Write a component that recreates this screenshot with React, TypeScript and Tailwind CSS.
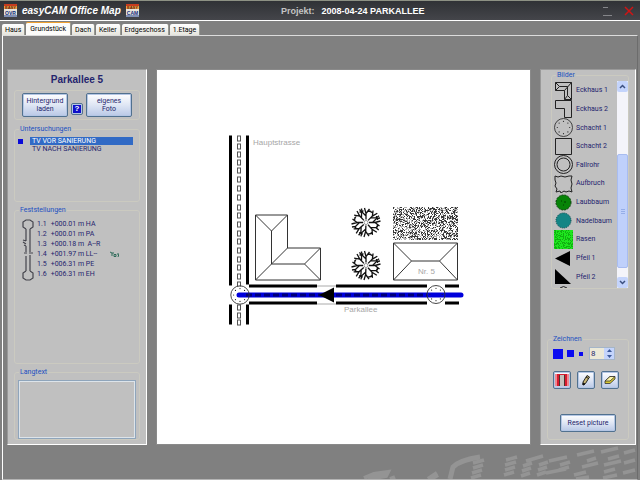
import React, { useState } from 'react';

const tabs = ['Haus', 'Grundstück', 'Dach', 'Keller', 'Erdgeschoss', '1.Etage'];

const inspections = ['TV VOR SANIERUNG', 'TV NACH SANIERUNG'];

const findings = [
  { no: '1.1', pos: '+000.01 m', code: 'HA' },
  { no: '1.2', pos: '+000.01 m', code: 'PA' },
  { no: '1.3', pos: '+000.18 m', code: ' A--R' },
  { no: '1.4', pos: '+001.97 m', code: 'LL--', photo: true },
  { no: '1.5', pos: '+006.31 m', code: 'PE' },
  { no: '1.6', pos: '+006.31 m', code: 'EH' },
];

// Speckles for lawn areas, always the same for a given seed
const speckles = (w: number, h: number, density: number, seed: number) => {
  let s = seed;
  let d = '';
  for (let y = 0; y < h; y++) {
    for (let x = 0; x < w; x++) {
      s = (s * 16807) % 2147483647;
      if (s / 2147483647 < density) d += `M${x} ${y}h1v1h-1z`;
    }
  }
  return d;
};

const lawnDark = speckles(65, 33, 0.32, 4711);
const lawnGray = speckles(65, 33, 0.4, 815);
const lawnIcon = speckles(19, 19, 0.4, 99);

const buttonStyle =
  'rounded-[2px] border border-[#51718f] bg-linear-to-b from-white via-[#dfe6f4] to-[#b9c8e6] text-[#24246a] shadow-[inset_0_0_0_1px_#b4c6e4]';

const Manhole = ({ cx, cy, r }: { cx: number; cy: number; r: number }) => (
  <g>
    <circle cx={cx} cy={cy} r={r} fill="none" stroke="#333" strokeWidth="0.9" />
    {[0, 45, 90, 135, 180, 225, 270, 315].map((a) => (
      <circle
        key={a}
        cx={cx + (r - 2.8) * Math.cos((a * Math.PI) / 180)}
        cy={cy + (r - 2.8) * Math.sin((a * Math.PI) / 180)}
        r="0.6"
        fill="#222"
        stroke="none"
      />
    ))}
  </g>
);

const Tree = ({ x, y }: { x: number; y: number }) => (
  <g transform={`translate(${x} ${y})`} fill="none" stroke="#111">
    <circle r="2" stroke="#777" strokeWidth="0.8" />
    {[-90, -45, 0, 48, 92, 138, 180, 226].map((a, i) => (
      <path
        key={a}
        transform={`rotate(${a}) scale(1 ${i % 3 === 1 ? -1 : 1})`}
        strokeWidth="1.300"
        d="M3 0H9L14.500 -1.500M9 0L13.500 3.500M6.500 0L10.500 -4L14 -4.500M10.500 -4V-6.500M11.500 2L11 5"
      />
    ))}
  </g>
);

const dashes = [135, 143, 151, 159, 167, 176, 185, 194, 204, 212, 221, 230, 238, 247, 256, 264, 273, 281, 304, 312, 319];

const SitePlan = () => (
  <svg viewBox="157 70 373 373" className="block h-full w-full" role="img" aria-label="Lageplan">
    {/* Hauptstrasse */}
    <path d="M229 135h3v150h-3zM246 135h3v149h-3zM229 304h3v20h-3zM246 304h3v20h-3z" fill="#000" />
    {dashes.map((y) => (
      <rect key={y} x="237.500" y={y + 0.5} width="3" height="5" fill="none" stroke="#555" strokeWidth="1" />
    ))}
    {/* Parkallee */}
    <path d="M249 284h68v3h-68zM336 284h91v3h-91zM445 284h14v3h-14zM249 301h68v3h-68zM336 301h91v3h-91zM445 301h14v3h-14z" fill="#000" />
    <path d="M317 285.500h19M317 303.500h19" stroke="#aaa" fill="none" />
    <rect x="231" y="286" width="18" height="17" fill="#fff" />
    <path d="M239 294.500H461" stroke="#0000dc" strokeWidth="5" strokeLinecap="round" />
    <path d="M246 294.500H427" stroke="#000078" strokeWidth="3" strokeDasharray="6 3" />
    <Manhole cx={240} cy={294.5} r={9.2} />
    <Manhole cx={436} cy={294} r={9} />
    <path d="M319 294.500L334 287v15z" fill="#000" />
    {/* Houses */}
    <g fill="none" stroke="#333" strokeWidth="1">
      <path d="M255.500 214.500h32v33h33v32h-65z" />
      <path d="M255.500 214.500l16 16l16 -16M271.500 230.500v33h33M255.500 279.500l32 -32M320.500 247.500l-16 16l16 16" />
      <path d="M393.500 242.500h64v37h-64zM393.500 242.500l18 18l-18 19M457.500 242.500l-18 18l18 19M411.500 260.500h28" />
    </g>
    <g transform="translate(393 206)" shapeRendering="crispEdges">
      <path d={lawnGray} fill="#b0b0b0" />
      <path d={lawnDark} fill="#383838" />
    </g>
    <Tree x={366} y={222} />
    <Tree x={366} y={265} />
    <g fill="#a6a6a6" fontSize="8" fontFamily="Liberation Sans, sans-serif">
      <text x="253" y="144">Hauptstrasse</text>
      <text x="344" y="311">Parkallee</text>
      <text x="418" y="273">Nr. 5</text>
    </g>
  </svg>
);

const pictures: { name: string; icon: React.ReactNode }[] = [
  {
    name: 'Eckhaus 1',
    icon: <path d="M1.500 1.500h16v17h-7v-9h-9zM1.500 1.500l4 4l-4 4M5.500 5.500h8v9l-3 4M13.500 14.500l4 4M10.500 9.500l7 -8" />,
  },
  { name: 'Eckhaus 2', icon: <path d="M1.500 1.500h16v17h-7v-9h-9z" /> },
  { name: 'Schacht 1', icon: <Manhole cx={9.5} cy={9.5} r={9} /> },
  { name: 'Schacht 2', icon: <path d="M1.500 1.500h16v16h-16z" /> },
  {
    name: 'Fallrohr',
    icon: (
      <>
        <circle cx="9.500" cy="9.500" r="9" />
        <circle cx="9.500" cy="9.500" r="6.500" />
      </>
    ),
  },
  {
    name: 'Aufbruch',
    icon: <path d="M1 2l3 1l3 -1l4 1l4 -1l3 0l-1 4l1 4l-1 4l1 4l-3 -1l-3 1l-2 -1l-3 2l-1 -2l-4 1l1 -3l-2 -3l1 -3l-1 -3z" />,
  },
  {
    name: 'Laubbaum',
    icon: (
      <>
        <circle cx="9.500" cy="9.500" r="7.500" fill="#078307" stroke="#023c02" strokeDasharray="2 1" />
        <path d="M7 8h1M10 9h2M9 12h1" stroke="#023c02" />
      </>
    ),
  },
  {
    name: 'Nadelbaum',
    icon: <circle cx="9.500" cy="9.500" r="7.500" fill="#148585" stroke="#05484c" strokeDasharray="1 1" />,
  },
  {
    name: 'Rasen',
    icon: (
      <>
        <rect width="19" height="19" fill="#1ee61e" stroke="none" />
        <path d={lawnIcon} fill="#10b010" stroke="none" shapeRendering="crispEdges" />
      </>
    ),
  },
  { name: 'Pfeil 1', icon: <path d="M1 9.500L16 2v15z" fill="#000" stroke="none" /> },
  { name: 'Pfeil 2', icon: <path d="M1 2v15h16z" fill="#000" stroke="none" /> },
];

// Small program badge in the title bar
const Badge = ({ label }: { label: string }) => (
  <svg viewBox="0 0 13 13" className="size-[13px]" aria-hidden="true">
    <rect width="13" height="13" fill="#e9e4da" />
    <path d="M0 0h13v2H0z" fill="#c83c1e" />
    <path d="M0 2h13v3H0z" fill="#f0a040" />
    <g fontFamily="Liberation Sans, sans-serif" fontWeight="700" textAnchor="middle">
      <text x="6.500" y="4.500" fontSize="4" fill="#5a1c10">EASY</text>
      <text x="6.500" y="10.500" fontSize="5" fill="#102c80">{label}</text>
    </g>
    <path d="M0 12h13" stroke="#183c90" />
  </svg>
);

const Group = ({ title, className, children }: { title: string; className: string; children: React.ReactNode }) => (
  <fieldset className={`relative min-w-0 rounded-[3px] border border-[#cbcac0] ${className}`}>
    <legend className="absolute -top-[5px] left-[4px] bg-[#c0c0c0] px-px leading-[9px] text-[#1c50c0]">{title}</legend>
    {children}
  </fieldset>
);

const App: React.FC = () => {
  const [tab, setTab] = useState('Grundstück');
  const [inspection, setInspection] = useState(inspections[0]);
  const [size, setSize] = useState(8);

  return (
    <div className="flex min-h-screen flex-col bg-[#808080] font-['Roboto','Liberation_Sans',sans-serif] text-[7px] leading-[10px] text-[#24246e]">
      {/* Title bar */}
      <header className="grid h-[21px] grid-cols-[281px_1fr_auto] items-center border-t border-b border-t-[#8d9184] border-b-white bg-linear-to-b from-[#303236] to-[#44454a] font-['Liberation_Sans',sans-serif]">
        <div className="flex items-center gap-[5px] pl-1">
          <Badge label="OVR" />
          <h1 className="text-[10px] font-bold text-white italic">easyCAM Office Map</h1>
          <Badge label="CAM" />
        </div>
        <div className="flex gap-[7px] text-[9px] font-bold">
          <span className="text-[#c4c4c4]">Projekt:</span>
          <span className="text-white">2008-04-24 PARKALLEE</span>
        </div>
        <div className="flex items-center gap-3 pr-[6px]">
          <button aria-label="Minimieren">
            <svg viewBox="0 0 10 10" className="size-[10px]" stroke="#85868a" fill="none">
              <path d="M1 1.500h5M1 9.500h9" />
            </svg>
          </button>
          <button aria-label="Schließen">
            <svg viewBox="0 0 10 10" className="size-[10px]" stroke="#d01414" strokeWidth="1.500">
              <path d="M1 1l8 8M9 1l-8 8" />
            </svg>
          </button>
        </div>
      </header>

      {/* Tabs */}
      <nav className="flex h-[14px] items-end gap-px pl-[2px]">
        {tabs.map((name) => (
          <button
            key={name}
            onClick={() => setTab(name)}
            className={
              name === tab
                ? 'h-[13px] rounded-t-[2px] border-t border-r border-t-[#f0a030] border-r-[#9a9a90] bg-[#fcfcfa] px-1 text-black'
                : 'h-[11px] rounded-t-[2px] border-r border-[#9a9a90] bg-linear-to-b from-white to-[#e6e5dd] px-[3px] text-black'
            }
          >
            {name}
          </button>
        ))}
      </nav>

      <main className="relative mr-[2px] ml-[2px] flex flex-1 flex-col border border-t-[#dcdcdc] border-r-[#6c6c6c] border-b-[#b4b4b4] border-l-white">
        <svg viewBox="0 0 275 38" className="absolute right-0 bottom-0 h-[38px] w-[275px]" aria-hidden="true">
          <g stroke="#949494" strokeWidth="3.500" fill="none">
            <path d="M2 37L12 33L26 31L24 35L6 38M28 38l5 -2M66 38L75 32M69 38L76 34" strokeWidth="4" />
            <path d="M88 38L91 26Q98 19 118 16" strokeWidth="5" />
            <path d="M111 22l11 -3M111 27l10 -3M110 32l10 -3M109 37l10 -3" />
            <path d="M144 19l11 -3M143 24l11 -3M143 29l10 -3M142 34l10 -3M164 20l17 -5M161 25l9 -3M160 30l9 -3M159 35l9 -3M177 24l9 -3M176 29l9 -3M175 34l9 -3M187 20l18 -4M198 24l10 -3M197 29l10 -3M184 32l20 -4" />
            <path d="M215 14l17 -4M225 20l9 -3M220 26l16 -4M212 34l12 -3M214 38l13 -2M239 11l17 -4M246 18l11 -3M242 24l17 -4M242 31l11 -3M241 37l14 -3M262 12l11 -3M262 22l11 -3M261 32l12 -3" />
          </g>
        </svg>

        <div className="relative mt-[33px] mr-[1px] mb-[34px] ml-[4px] grid flex-1 grid-cols-[140px_1fr_96px] gap-[9px]">
          {/* Left panel */}
          <section className="flex flex-col border border-t-[#999] border-r-white border-b-white border-l-[#999] bg-[#c0c0c0] px-[6px] pb-1">
            <h2 className="pt-1 text-center font-['Liberation_Sans',sans-serif] text-[10px] leading-[12px] font-bold">Parkallee 5</h2>
            <div className="mt-1 flex h-[30px] items-center justify-center gap-[3px] rounded-[3px] border border-[#cbcac0]">
              <button className={`h-[24px] w-[46px] leading-[8px] ${buttonStyle}`}>
                Hintergrund
                <br />
                laden
              </button>
              <button aria-label="Hilfe" className={`mt-2 flex size-[12px] items-center justify-center p-px ${buttonStyle}`}>
                <span className="w-full bg-[#1010c8] font-['Liberation_Sans',sans-serif] text-[8px] leading-[8px] font-bold text-white">?</span>
              </button>
              <button className={`h-[24px] w-[46px] leading-[8px] ${buttonStyle}`}>
                eigenes
                <br />
                Foto
              </button>
            </div>

            <Group title="Untersuchungen" className="mt-[9px] h-[73px] pt-[7px] pr-[6px]">
              {inspections.map((name) => (
                <button key={name} onClick={() => setInspection(name)} className="flex w-full items-center pl-[3px] text-left leading-[8px]">
                  <span className={name === inspection ? 'mr-[7px] size-[5px] bg-[#0a0ad8]' : 'mr-[7px] size-[5px]'} />
                  <span className={name === inspection ? 'flex-1 bg-[#316ac5] pl-[2px] text-white' : 'flex-1 pl-[2px]'}>{name}</span>
                </button>
              ))}
            </Group>

            <Group title="Feststellungen" className="mt-[8px] flex h-[154px] gap-[2px] pt-[8px] pl-[7px]">
              <svg viewBox="0 0 13 62" className="h-[62px] w-[13px] shrink-0" fill="none" stroke="#44444c" strokeWidth="1.200" aria-hidden="true">
                <path d="M4 10L1 8V3L4 1H8L11 3V8L8 10M4 10V22M8 10V33M4 22L1 21M4 25L1 23M4 27L2 26M4 27V33M2 34h3M7 34h4M4 37V52M8 36V52M4 52L1 54V59L4 61H8L11 59V54L8 52" />
              </svg>
              <ul className="flex-1">
                {findings.map((f) => (
                  <li key={f.no} className="flex gap-[4px] whitespace-pre">
                    <span>{f.no}</span>
                    <span>
                      {f.pos} {f.code}
                    </span>
                    {f.photo && (
                      <svg viewBox="0 0 9 7" className="mt-[2px] mr-5 ml-auto h-[7px] w-[9px]" fill="none" stroke="#2c6a58" aria-label="Foto">
                        <path d="M0 1l2 1h2M2 2v3M4 3.500h2v2H4zM7 3h2l-1 3" />
                      </svg>
                    )}
                  </li>
                ))}
              </ul>
            </Group>

            <Group title="Langtext" className="mt-[8px] flex flex-1 px-[3px] pt-[7px]">
              <textarea aria-label="Langtext" className="block w-full flex-1 resize-none border border-[#8fa5bb] bg-[#c0c0c0] shadow-[inset_0_0_0_1px_#dde4ea] outline-none" />
            </Group>
          </section>

          {/* Drawing area */}
          <section className="border border-[#8a8a8a] bg-white">
            <SitePlan />
          </section>

          {/* Right panel */}
          <section className="flex flex-col border border-t-[#999] border-r-white border-b-white border-l-[#999] bg-[#c0c0c0] px-[6px]">
            <Group title="Bilder" className="mt-[5px] ml-[4px] flex h-[214px] justify-between pt-[5px] pl-[2px]">
              <div className="flex h-[207px] flex-1 flex-col">
                <ul className="grid min-h-0 flex-1 auto-rows-[minmax(0,1fr)]">
                  {pictures.map((p) => (
                    <li key={p.name} className="min-h-0">
                      <button className="flex h-full w-full items-center gap-[3px] whitespace-nowrap">
                        <svg viewBox="0 0 19 19" className="size-[19px] shrink-0" fill="none" stroke="#222" aria-hidden="true">
                          {p.icon}
                        </svg>
                        {p.name}
                      </button>
                    </li>
                  ))}
                </ul>
                {/* Next picture, cut off by the list's end */}
                <svg viewBox="0 0 19 2" className="h-[2px] w-[19px] shrink-0" fill="none" stroke="#222" aria-hidden="true">
                  <path d="M6 2Q9.500 -1 13 2" />
                </svg>
              </div>
              <div className="flex h-[207px] w-[11px] shrink-0 flex-col bg-[#f4f4fa]">
                <button aria-label="Nach oben" className="flex h-[11px] items-center justify-center rounded-[2px] bg-[#c4d4fc]">
                  <svg viewBox="0 0 7 5" className="h-[5px] w-[7px]" fill="none" stroke="#3c5080" strokeWidth="1.500">
                    <path d="M1 4l2.500 -2.500L6 4" />
                  </svg>
                </button>
                <div className="mt-[62px] flex h-[114px] flex-col items-center justify-center gap-px rounded-[2px] border border-[#a8bcf0] bg-[#bfd0fb]">
                  <span className="h-px w-1 bg-[#96aee8]" />
                  <span className="h-px w-1 bg-[#96aee8]" />
                  <span className="h-px w-1 bg-[#96aee8]" />
                </div>
                <button aria-label="Nach unten" className="mt-auto flex h-[11px] items-center justify-center rounded-[2px] bg-[#c4d4fc]">
                  <svg viewBox="0 0 7 5" className="h-[5px] w-[7px]" fill="none" stroke="#3c5080" strokeWidth="1.500">
                    <path d="M1 1l2.500 2.500L6 1" />
                  </svg>
                </button>
              </div>
            </Group>

            <Group title="Zeichnen" className="mt-auto mb-1 h-[101px] px-[5px] pt-[7px]">
              <div className="flex items-center">
                <button aria-label="Dick" className="size-[10px] bg-[#0a0af0]" />
                <button aria-label="Mittel" className="ml-1 size-[7px] bg-[#0a0af0]" />
                <button aria-label="Dünn" className="ml-[5px] size-[4px] bg-[#0a0af0]" />
                <div className="ml-[6px] flex h-[13px] w-[26px] border border-[#a5b5c8] bg-[#ece9d8]">
                  <input aria-label="Stiftbreite" value={size} onChange={(e) => setSize(Number(e.target.value) || 0)} className="w-[14px] pl-px text-[8px] outline-none" />
                  <div className="flex flex-1 flex-col bg-[#c4d4fc]">
                    <button aria-label="Mehr" onClick={() => setSize(size + 1)} className="flex flex-1 items-center justify-center">
                      <svg viewBox="0 0 5 3" className="h-[3px] w-[5px]" fill="#3c5a9c"><path d="M0 3h5L2.500 0z" /></svg>
                    </button>
                    <button aria-label="Weniger" onClick={() => setSize(size - 1)} className="flex flex-1 items-center justify-center">
                      <svg viewBox="0 0 5 3" className="h-[3px] w-[5px]" fill="#3c5a9c"><path d="M0 0h5L2.500 3z" /></svg>
                    </button>
                  </div>
                </div>
              </div>
              <div className="mt-[11px] flex gap-[6px]">
                <button aria-label="Rohr" className={`flex size-[18px] items-center justify-center ${buttonStyle}`}>
                  <svg viewBox="0 0 14 14" className="size-[14px]">
                    <path d="M0 1h14v12H0z" fill="#d81c30" />
                    <path d="M0 1h2v12H0zM12 1h2v12h-2z" fill="#f08890" />
                    <path d="M5 2h4v11H5z" fill="#c4c0bc" />
                    <path d="M4.500 2v11M9.500 2v11" stroke="#503030" />
                  </svg>
                </button>
                <button aria-label="Stift" className={`flex size-[18px] items-center justify-center ${buttonStyle}`}>
                  <svg viewBox="0 0 12 12" className="size-[12px]" stroke="#111" strokeWidth="0.900">
                    <path d="M3 11V8L7 1.500L9.500 3L5.500 9.500z" fill="#c9b878" />
                    <path d="M3 11V9L5 10zM6 3L8.500 4.500" fill="#111" />
                  </svg>
                </button>
                <button aria-label="Radierer" className={`flex size-[18px] items-center justify-center ${buttonStyle}`}>
                  <svg viewBox="0 0 12 12" className="size-[12px]" stroke="#333" strokeWidth="0.800">
                    <path d="M1 7L6 2.500H11V5L6 9.500H1z" fill="#d8c830" />
                    <path d="M1 7L6 2.500H11L6 7z" fill="#fff6a8" />
                  </svg>
                </button>
              </div>
              <button className={`mx-auto mt-[25px] block h-[18px] w-[56px] ${buttonStyle}`}>Reset picture</button>
            </Group>
          </section>
        </div>
      </main>
    </div>
  );
};

export default App;
